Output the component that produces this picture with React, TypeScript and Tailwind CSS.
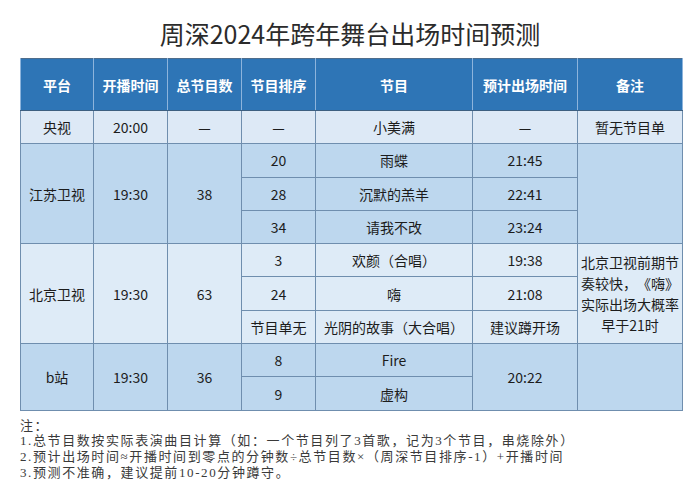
const sans = "font-['Noto_Sans_CJK_SC','Noto_Sans',sans-serif]";

const cell = "border border-[#6f8eae] text-center align-middle p-0";
const rowH = "h-[33.3px]";

export default function App() {
  return (
    <div className={`w-[700px] h-[500px] bg-white [text-spacing-trim:space-all] ${sans}`}>
      <div className="pt-[20px] text-center text-[25px] leading-[26px] text-[#2b2b2b]">
        周深2024年跨年舞台出场时间预测
      </div>

      <div className="mt-[12px] pl-[20px]">
        <table className="w-[662px] table-fixed border-collapse border border-[#4f6d8c] text-[14px] leading-[20px] text-[#1c1c1c]">
          <colgroup>
            <col className="w-[73px]" />
            <col className="w-[74px]" />
            <col className="w-[74px]" />
            <col className="w-[74px]" />
            <col className="w-[157px]" />
            <col className="w-[105px]" />
            <col className="w-[105px]" />
          </colgroup>
          <thead>
            <tr className="h-[52px] bg-[#2e75b6] text-white font-bold">
              {["平台", "开播时间", "总节目数", "节目排序", "节目", "预计出场时间", "备注"].map((h) => (
                <th key={h} className="border-x border-x-[#8db4dc] border-b border-b-[#3d5f80] text-center align-middle p-0">
                  {h}
                </th>
              ))}
            </tr>
          </thead>
          <tbody>
            {/* 央视 */}
            <tr className={`${rowH} bg-[#dde9f6]`}>
              <td className={cell}>央视</td>
              <td className={cell}>20:00</td>
              <td className={cell}>—</td>
              <td className={cell}>—</td>
              <td className={cell}>小美满</td>
              <td className={cell}>—</td>
              <td className={cell}>暂无节目单</td>
            </tr>

            {/* 江苏卫视 */}
            <tr className={`${rowH} bg-[#bdd7ee]`}>
              <td rowSpan={3} className={cell}>江苏卫视</td>
              <td rowSpan={3} className={cell}>19:30</td>
              <td rowSpan={3} className={cell}>38</td>
              <td className={cell}>20</td>
              <td className={cell}>雨蝶</td>
              <td className={cell}>21:45</td>
              <td rowSpan={3} className={cell}></td>
            </tr>
            <tr className={`${rowH} bg-[#bdd7ee]`}>
              <td className={cell}>28</td>
              <td className={cell}>沉默的羔羊</td>
              <td className={cell}>22:41</td>
            </tr>
            <tr className={`${rowH} bg-[#bdd7ee]`}>
              <td className={cell}>34</td>
              <td className={cell}>请我不改</td>
              <td className={cell}>23:24</td>
            </tr>

            {/* 北京卫视 */}
            <tr className={`${rowH} bg-[#deebf7]`}>
              <td rowSpan={3} className={cell}>北京卫视</td>
              <td rowSpan={3} className={cell}>19:30</td>
              <td rowSpan={3} className={cell}>63</td>
              <td className={cell}>3</td>
              <td className={cell}>欢颜（合唱）</td>
              <td className={cell}>19:38</td>
              <td rowSpan={3} className={`${cell} leading-[21px]`}>
                北京卫视前期节
                <br />
                奏较快，《嗨》
                <br />
                实际出场大概率
                <br />
                早于21时
              </td>
            </tr>
            <tr className={`${rowH} bg-[#deebf7]`}>
              <td className={cell}>24</td>
              <td className={cell}>嗨</td>
              <td className={cell}>21:08</td>
            </tr>
            <tr className={`${rowH} bg-[#deebf7]`}>
              <td className={cell}>节目单无</td>
              <td className={cell}>光阴的故事（大合唱）</td>
              <td className={cell}>建议蹲开场</td>
            </tr>

            {/* b站 */}
            <tr className={`${rowH} bg-[#bdd7ee]`}>
              <td rowSpan={2} className={cell}>b站</td>
              <td rowSpan={2} className={cell}>19:30</td>
              <td rowSpan={2} className={cell}>36</td>
              <td className={cell}>8</td>
              <td className={cell}>Fire</td>
              <td rowSpan={2} className={cell}>20:22</td>
              <td rowSpan={2} className={cell}></td>
            </tr>
            <tr className={`${rowH} bg-[#bdd7ee]`}>
              <td className={cell}>9</td>
              <td className={cell}>虚构</td>
            </tr>
          </tbody>
        </table>
      </div>

      <div className="pl-[20px] pt-[7px] font-['Liberation_Serif','Noto_Sans_CJK_SC',serif] text-[13px] leading-[15.7px] tracking-[1.6px] text-[#3a3a3a]">
        <div>注：</div>
        <div>1.总节目数按实际表演曲目计算（如：一个节目列了3首歌，记为3个节目，串烧除外）</div>
        <div>2.预计出场时间≈开播时间到零点的分钟数÷总节目数×（周深节目排序-1）+开播时间</div>
        <div>3.预测不准确，建议提前10-20分钟蹲守。</div>
      </div>
    </div>
  );
}
